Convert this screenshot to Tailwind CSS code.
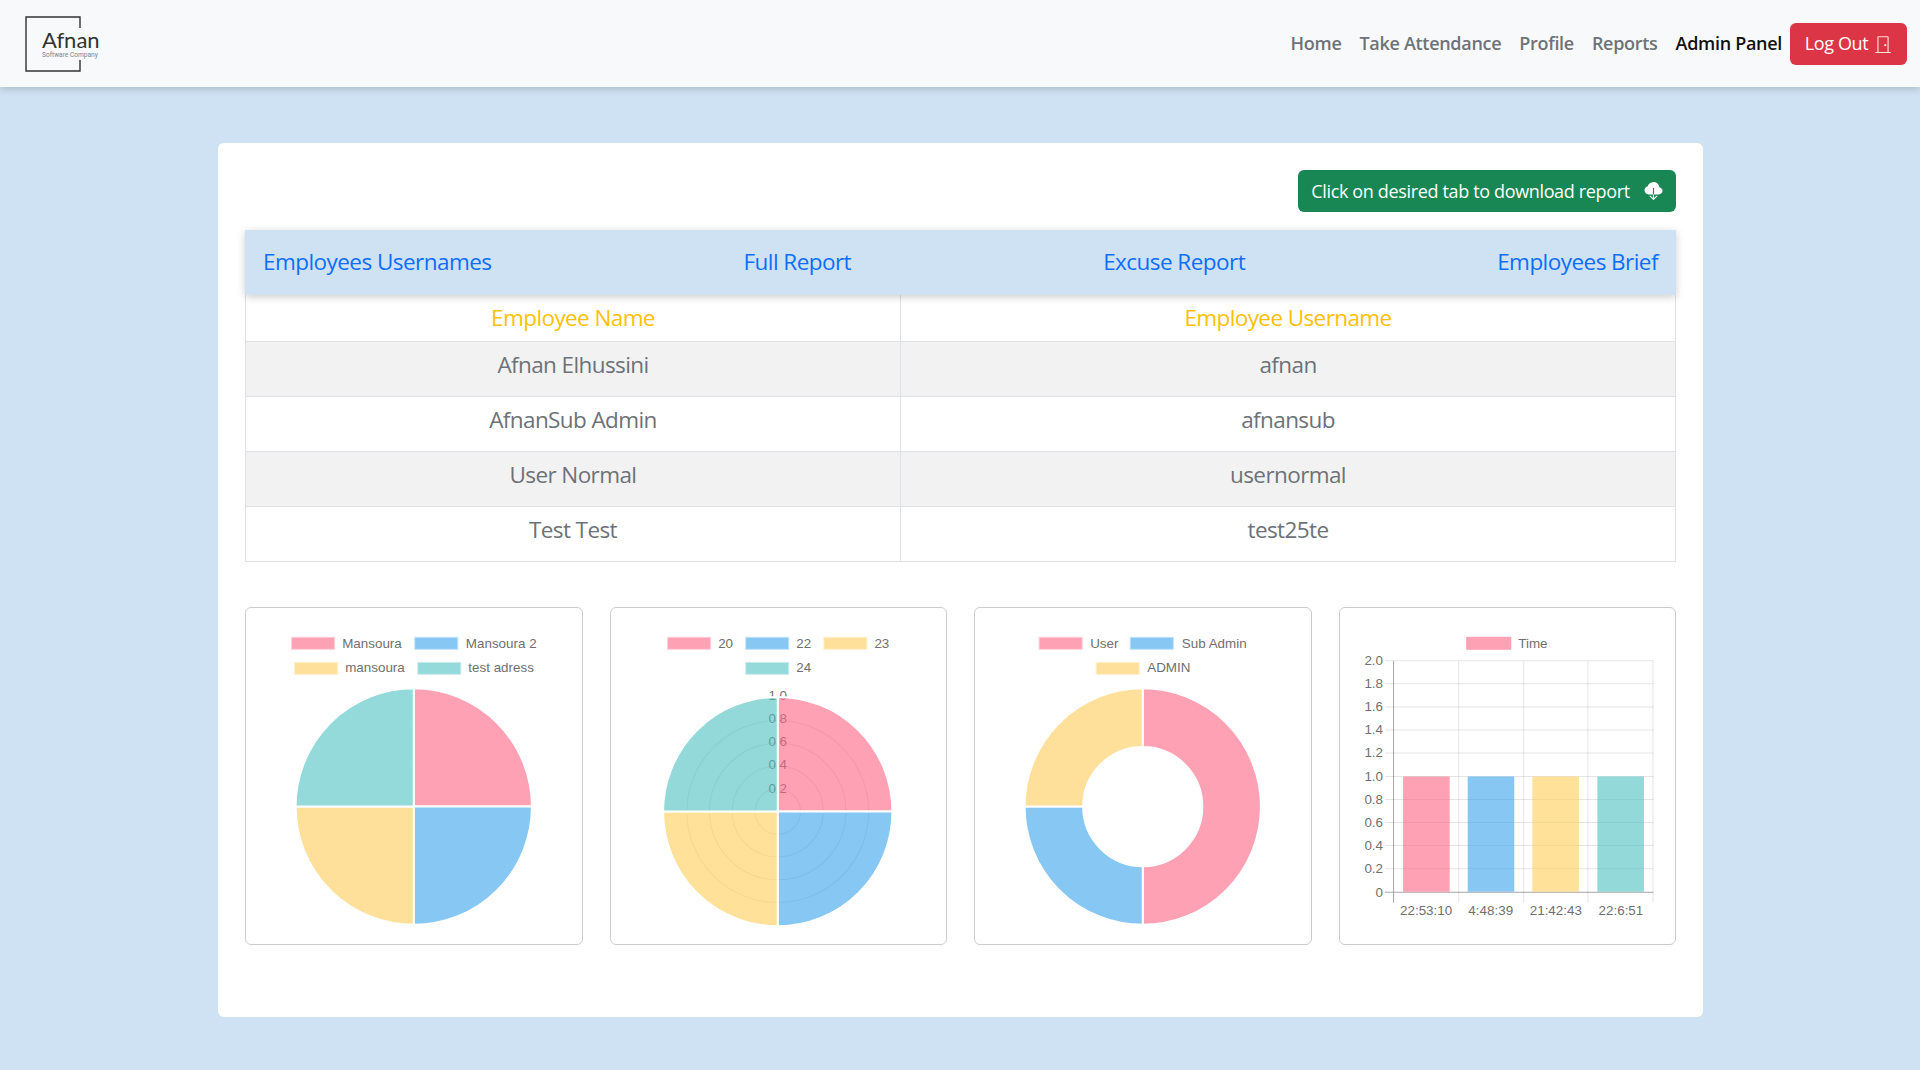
<!DOCTYPE html>
<html lang="en">
<head>
    <meta charset="UTF-8">
    <meta name="viewport" content="width=device-width, initial-scale=1.0">
    <title>Reports</title>
    <script src="https://cdn.jsdelivr.net/npm/@tailwindcss/browser@4"></script>
</head>
<body class="bg-[#cfe2f3] min-h-[1070px] overflow-hidden font-['Open_Sans',sans-serif]">
    <nav class="h-[87px] bg-[#f8f9fa] shadow-[0_2px_8px_rgba(0,0,0,0.18)] flex items-center justify-between pl-[25px] pr-[13px]">
        <!-- logo -->
        <div class="relative w-[75px] h-[56px]">
            <svg class="absolute left-0 top-0" width="57" height="56" viewBox="0 0 57 56" fill="none">
                <path d="M55 12V1H1V55H55V44" stroke="#333" stroke-width="1.4"/>
            </svg>
            <span class="absolute left-[17px] top-[9px] text-[22px] leading-[30px] text-[#333] font-['Lato',sans-serif]">Afnan</span>
            <span class="absolute left-[17px] top-[35px] text-[6.6px] leading-[8px] text-[#7c858e] whitespace-nowrap font-['Roboto',sans-serif]">Software Company</span>
        </div>
        <div class="flex items-center text-[18px] font-semibold text-[#6f7276] tracking-[-0.3px]">
            <a class="mr-[18px]">Home</a>
            <a class="mr-[18px]">Take Attendance</a>
            <a class="mr-[18px]">Profile</a>
            <a class="mr-[18px]">Reports</a>
            <a class="mr-[8px] text-[#111]">Admin Panel</a>
            <button class="w-[117px] h-[42px] bg-[#dc3545] rounded-[6px] text-white font-normal flex items-center justify-center gap-[6px] tracking-[-0.4px]">
                Log Out
                <svg width="18" height="20" viewBox="0 0 16 16" fill="#ffe3d6"><path d="M3 2a1 1 0 0 1 1-1h8a1 1 0 0 1 1 1v13h1.5a.5.5 0 0 1 0 1h-13a.5.5 0 0 1 0-1H3V2zm1 13h8V2H4v13z"/><path d="M9 9a1 1 0 1 0 2 0 1 1 0 0 0-2 0z"/></svg>
            </button>
        </div>
    </nav>

    <main class="w-[1485px] h-[874px] ml-[218px] mt-[56px] bg-white rounded-[6px] px-[27px] pt-[27px]">
        <div class="flex justify-end">
            <button class="w-[378px] h-[42px] bg-[#198754] text-white rounded-[6px] text-[18px] tracking-[-0.35px] flex items-center justify-center gap-[14px]">
                Click on desired tab to download report
                <svg width="19" height="18" viewBox="0 0 16 16" fill="#fff"><path fill-rule="evenodd" d="M8 0a5.53 5.53 0 0 0-3.594 1.342c-.766.66-1.321 1.52-1.464 2.383C1.266 4.095 0 5.555 0 7.318 0 9.366 1.708 11 3.781 11H7.5V5.5a.5.5 0 0 1 1 0V11h4.188C14.502 11 16 9.57 16 7.773c0-1.636-1.242-2.969-2.834-3.194C12.923 1.999 10.69 0 8 0zm-.354 15.854a.5.5 0 0 0 .708 0l3-3a.5.5 0 0 0-.708-.708L8.5 14.293V11h-1v3.293l-2.146-2.147a.5.5 0 0 0-.708.708l3 3z"/></svg>
            </button>
        </div>

        <div class="relative z-10 mt-[18px] h-[65px] pb-[2px] bg-[#cfe2f3] shadow-[0_2px_8px_rgba(0,0,0,0.2)] flex items-center justify-between px-[18px] text-[22.5px] text-[#0d6efd] tracking-[-0.55px]">
            <a>Employees Usernames</a>
            <a>Full Report</a>
            <a>Excuse Report</a>
            <a>Employees Brief</a>
        </div>

        <table class="w-full table-fixed border-collapse text-center text-[22.5px] font-medium text-[#6c7278] tracking-[-0.6px]">
            <colgroup><col class="w-[655px]"><col></colgroup>
            <thead>
                <tr class="h-[46px] text-[#ffc107]">
                    <th class="font-medium pt-[1px] border border-t-0 border-[#dee2e6]">Employee Name</th>
                    <th class="font-medium pt-[1px] border border-t-0 border-[#dee2e6]">Employee Username</th>
                </tr>
            </thead>
            <tbody>
                <tr class="h-[55px] bg-[#f2f2f2]">
                    <td class="border border-[#dee2e6] pb-[8px]">Afnan Elhussini</td>
                    <td class="border border-[#dee2e6] pb-[8px]">afnan</td>
                </tr>
                <tr class="h-[55px]">
                    <td class="border border-[#dee2e6] pb-[8px]">AfnanSub Admin</td>
                    <td class="border border-[#dee2e6] pb-[8px]">afnansub</td>
                </tr>
                <tr class="h-[55px] bg-[#f2f2f2]">
                    <td class="border border-[#dee2e6] pb-[8px]">User Normal</td>
                    <td class="border border-[#dee2e6] pb-[8px]">usernormal</td>
                </tr>
                <tr class="h-[55px]">
                    <td class="border border-[#dee2e6] pb-[8px]">Test Test</td>
                    <td class="border border-[#dee2e6] pb-[8px]">test25te</td>
                </tr>
            </tbody>
        </table>

        <div class="grid grid-cols-4 gap-[27px] mt-[45px] font-['Liberation_Sans',sans-serif]">
            <!-- pie -->
            <div class="h-[338px] border border-[#ccc] rounded-[6px]">
                <svg class="block w-full h-full" viewBox="1 1 335 335" font-size="13.4" fill="#707070">
                    <rect x="46.5" y="30" width="43" height="12" fill="#ffa1b5" stroke="#ffd0da"/><text x="97" y="40.5">Mansoura</text>
                    <rect x="169.5" y="30" width="43" height="12" fill="#86c7f3" stroke="#c3e3f9"/><text x="220.5" y="40.5">Mansoura 2</text>
                    <rect x="49.5" y="55" width="43" height="12" fill="#ffe09a" stroke="#fff0cd"/><text x="100" y="65">mansoura</text>
                    <rect x="172.5" y="55" width="43" height="12" fill="#95dada" stroke="#caecec"/><text x="223" y="65">test adress</text>
                    <g stroke="#fff" stroke-width="2">
                        <path d="M168.5 199V81A118 118 0 0 1 286.5 199Z" fill="#ffa1b5"/>
                        <path d="M168.5 199H286.5A118 118 0 0 1 168.5 317Z" fill="#86c7f3"/>
                        <path d="M168.5 199V317A118 118 0 0 1 50.5 199Z" fill="#ffe09a"/>
                        <path d="M168.5 199H50.5A118 118 0 0 1 168.5 81Z" fill="#95dada"/>
                    </g>
                </svg>
            </div>
            <!-- polar area -->
            <div class="h-[338px] border border-[#ccc] rounded-[6px]">
                <svg class="block w-full h-full" viewBox="2 1 335 335" font-size="13.4" fill="#707070">
                    <rect x="58.5" y="30" width="43" height="12" fill="#ffa1b5" stroke="#ffd0da"/><text x="109" y="40.5">20</text>
                    <rect x="136.5" y="30" width="43" height="12" fill="#86c7f3" stroke="#c3e3f9"/><text x="187" y="40.5">22</text>
                    <rect x="214.5" y="30" width="43" height="12" fill="#ffe09a" stroke="#fff0cd"/><text x="265" y="40.5">23</text>
                    <rect x="136.5" y="55" width="43" height="12" fill="#95dada" stroke="#caecec"/><text x="187" y="65">24</text>
                    <g fill="none" stroke="#000" stroke-opacity="0.1">
                        <circle cx="168.5" cy="204" r="22.7"/><circle cx="168.5" cy="204" r="45.4"/><circle cx="168.5" cy="204" r="68.1"/><circle cx="168.5" cy="204" r="90.8"/>
                    </g>
                    <g text-anchor="middle">
                        <text x="168.5" y="93">1.0</text><text x="168.5" y="116">0.8</text><text x="168.5" y="139">0.6</text><text x="168.5" y="162">0.4</text><text x="168.5" y="185">0.2</text>
                    </g>
                    <g stroke="#fff" stroke-width="2" fill-opacity="0.6">
                        <path d="M168.5 204V89.5A114.5 114.5 0 0 1 283 204Z" fill="#ff6384"/>
                        <path d="M168.5 204H283A114.5 114.5 0 0 1 168.5 318.5Z" fill="#36a2eb"/>
                        <path d="M168.5 204V318.5A114.5 114.5 0 0 1 54 204Z" fill="#ffcd56"/>
                        <path d="M168.5 204H54A114.5 114.5 0 0 1 168.5 89.5Z" fill="#4bc0c0"/>
                    </g>
                </svg>
            </div>
            <!-- doughnut -->
            <div class="h-[338px] border border-[#ccc] rounded-[6px]">
                <svg class="block w-full h-full" viewBox="1 1 335 335" font-size="13.4" fill="#707070">
                    <rect x="65" y="30" width="43" height="12" fill="#ffa1b5" stroke="#ffd0da"/><text x="116" y="40.5">User</text>
                    <rect x="156" y="30" width="43" height="12" fill="#86c7f3" stroke="#c3e3f9"/><text x="207.5" y="40.5">Sub Admin</text>
                    <rect x="122" y="55" width="43" height="12" fill="#ffe09a" stroke="#fff0cd"/><text x="173" y="65">ADMIN</text>
                    <g stroke="#fff" stroke-width="2">
                        <path d="M168.5 81A118 118 0 0 1 168.5 317V258.5A59.5 59.5 0 0 0 168.5 139.5Z" fill="#ffa1b5"/>
                        <path d="M168.5 317A118 118 0 0 1 50.5 199H109A59.5 59.5 0 0 0 168.5 258.5Z" fill="#86c7f3"/>
                        <path d="M50.5 199A118 118 0 0 1 168.5 81V139.5A59.5 59.5 0 0 0 109 199Z" fill="#ffe09a"/>
                    </g>
                </svg>
            </div>
            <!-- bar -->
            <div class="h-[338px] border border-[#ccc] rounded-[6px]">
                <svg class="block w-full h-full" viewBox="2 2 335 335" font-size="13.4" fill="#707070">
                    <rect x="128" y="30.5" width="45" height="13" fill="#ffa1b5"/><text x="180" y="41.5">Time</text>
                    <g stroke="#000" stroke-opacity="0.1">
                        <path d="M47 54.5H315M47 77.5H315M47 100.5H315M47 123.5H315M47 146.5H315M47 170H315M47 193H315M47 216H315M47 239H315M47 262H315"/>
                        <path d="M120.5 54.5V296M185.5 54.5V296M249.5 54.5V296M314.5 54.5V296"/>
                    </g>
                    <path d="M55.5 54.5V296M47 285.5H315" stroke="#000" stroke-opacity="0.35" fill="none"/>
                    <rect x="65" y="170" width="46.5" height="115" fill="#ff6384" fill-opacity="0.6"/>
                    <rect x="129.5" y="170" width="46.5" height="115" fill="#36a2eb" fill-opacity="0.6"/>
                    <rect x="194" y="170" width="46.5" height="115" fill="#ffcd56" fill-opacity="0.6"/>
                    <rect x="259" y="170" width="46.5" height="115" fill="#4bc0c0" fill-opacity="0.6"/>
                    <g text-anchor="end">
                        <text x="45" y="59">2.0</text><text x="45" y="82">1.8</text><text x="45" y="105">1.6</text><text x="45" y="128">1.4</text><text x="45" y="151">1.2</text><text x="45" y="174.5">1.0</text><text x="45" y="197.5">0.8</text><text x="45" y="220.5">0.6</text><text x="45" y="243.5">0.4</text><text x="45" y="266.5">0.2</text><text x="45" y="290">0</text>
                    </g>
                    <g text-anchor="middle">
                        <text x="88" y="308">22:53:10</text><text x="152.5" y="308">4:48:39</text><text x="217.5" y="308">21:42:43</text><text x="282.5" y="308">22:6:51</text>
                    </g>
                </svg>
            </div>
        </div>
    </main>
</body>
</html>
